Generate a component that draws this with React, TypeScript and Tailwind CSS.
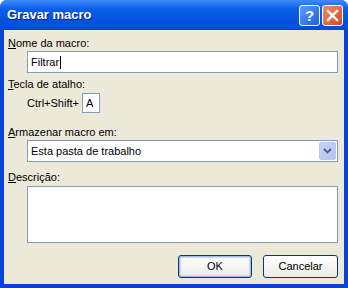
const font = { fontFamily: '"Liberation Sans", Arial, sans-serif' };

function Label({ u, rest }: { u: string; rest: string }) {
  return (
    <div className="text-[11px] leading-[13px] text-black">
      <span className="underline underline-offset-1">{u}</span>
      {rest}
    </div>
  );
}

export default function App() {
  return (
    <div
      className="w-[348px] h-[288px] flex flex-col rounded-t-[7px] overflow-hidden bg-[#0842d8]"
      style={font}
    >
      {/* Title bar */}
      <div className="h-[30px] shrink-0 flex items-center pl-[7px] pr-[5px] bg-gradient-to-b from-[#3d8bf7] via-[#0a5ee9] via-30% to-[#0249d6]">
        <span className="flex-1 text-[13px] font-bold text-white [text-shadow:1px_1px_0_#0a1f6b]">
          Gravar macro
        </span>
        <div className="flex gap-[2px]">
          <div className="w-[21px] h-[21px] rounded-[3px] border border-white bg-gradient-to-br from-[#5a9bff] to-[#1e5fe0] flex items-center justify-center text-white font-bold text-[15px] leading-none">
            ?
          </div>
          <div className="w-[21px] h-[21px] rounded-[3px] border border-white bg-gradient-to-br from-[#f08a6a] to-[#d2471f] flex items-center justify-center">
            <svg width="13" height="13" viewBox="0 0 13 13">
              <path d="M2 2 L11 11 M11 2 L2 11" stroke="white" strokeWidth="2.4" strokeLinecap="square" />
            </svg>
          </div>
        </div>
      </div>

      {/* Body */}
      <div className="flex-1 mx-[4px] mb-[4px] bg-[#ece9d8] flex flex-col pl-[4px] pr-[6px] pt-[7px]">
        <Label u="N" rest="ome da macro:" />
        <div className="ml-[19px] mt-[1px] h-[22px] bg-white border border-[#7f9db9] flex items-center px-[3px] text-[11px]">
          Filtrar<span className="w-px h-[13px] bg-black ml-px" />
        </div>

        <div className="mt-[5px]">
          <Label u="T" rest="ecla de atalho:" />
        </div>
        <div className="ml-[19px] mt-[2px] flex items-center gap-[3px] text-[11px]">
          <span>Ctrl+Shift+</span>
          <div className="w-[18px] h-[20px] bg-white border border-[#7f9db9] flex items-center px-[3px]">A</div>
        </div>

        <div className="mt-[13px]">
          <Label u="A" rest="rmazenar macro em:" />
        </div>
        <div className="ml-[19px] mt-[1px] h-[22px] bg-white border border-[#7f9db9] flex items-center pl-[3px] pr-px text-[11px]">
          <span className="flex-1">Esta pasta de trabalho</span>
          <div className="w-[17px] h-[18px] rounded-[2px] bg-gradient-to-br from-[#c6d3f7] to-[#b1c4f5] border border-[#b6c8f2] flex items-center justify-center">
            <svg width="9" height="6" viewBox="0 0 9 6">
              <path d="M1 1 L4.5 4.5 L8 1" stroke="#4d6185" strokeWidth="1.8" fill="none" />
            </svg>
          </div>
        </div>

        <div className="mt-[9px]">
          <Label u="D" rest="escrição:" />
        </div>
        <div className="ml-[19px] mt-[2px] h-[57px] bg-white border border-[#7f9db9]" />

        <div className="flex justify-end gap-[11px] mt-[12px]">
          <button className="w-[74px] h-[23px] rounded-[3px] border border-[#003c74] bg-gradient-to-b from-white to-[#ecebe6] text-[11px] shadow-[inset_0_0_0_1px_#a6b9e6,inset_0_0_0_2px_#cddbf5]">
            OK
          </button>
          <button className="w-[75px] h-[23px] rounded-[3px] border border-[#003c74] bg-gradient-to-b from-white to-[#ecebe6] text-[11px]">
            Cancelar
          </button>
        </div>
      </div>
    </div>
  );
}
